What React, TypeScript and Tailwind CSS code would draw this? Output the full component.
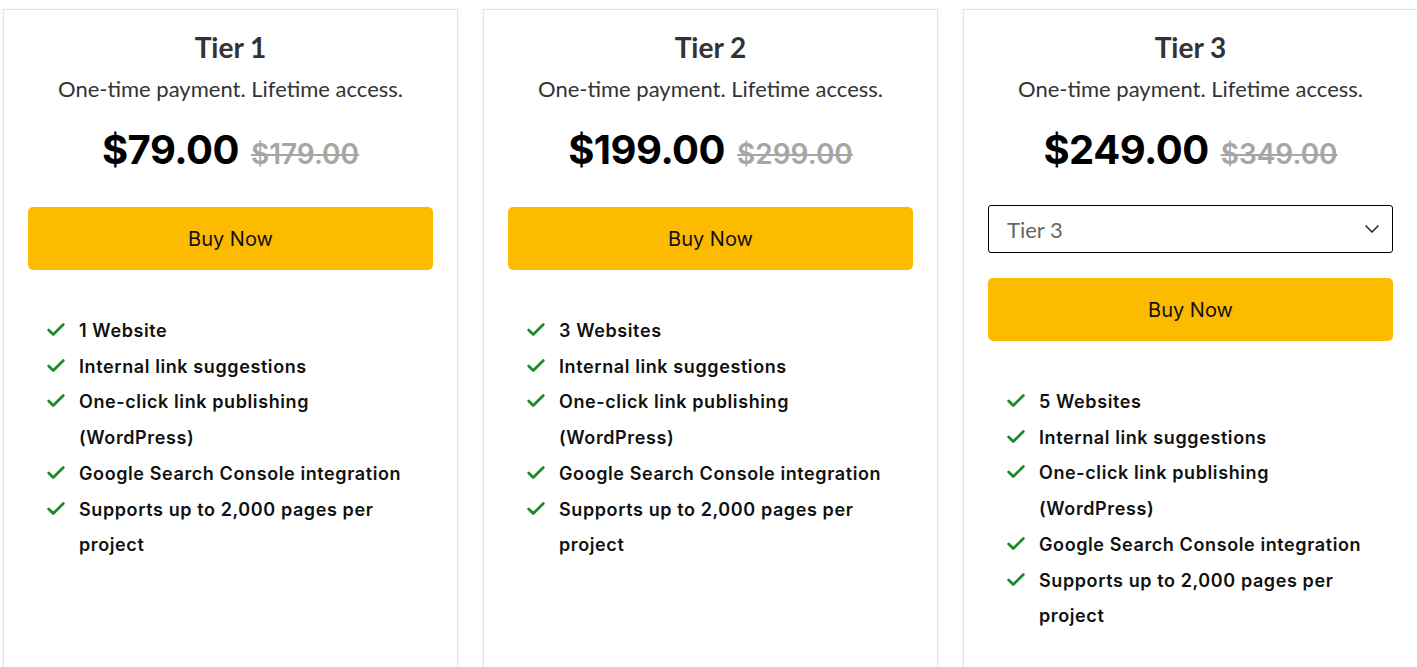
import { Check, ChevronDown } from 'lucide-react'

const features = (sites: string) => [
  sites,
  'Internal link suggestions',
  'One-click link publishing (WordPress)',
  'Google Search Console integration',
  'Supports up to 2,000 pages per project',
]

const tiers = [
  { name: 'Tier 1', price: '$79.00', old: '$179.00', sites: '1 Website', select: false },
  { name: 'Tier 2', price: '$199.00', old: '$299.00', sites: '3 Websites', select: false },
  { name: 'Tier 3', price: '$249.00', old: '$349.00', sites: '5 Websites', select: true },
]

function Card({ tier }: { tier: (typeof tiers)[number] }) {
  return (
    <div className="w-[455px] shrink-0 h-[680px] bg-white border border-[#e3e3e3] shadow-[0_0_4px_rgba(0,0,0,0.06)] px-6 pt-[21px]">
      <h2 className="text-center text-[28px] leading-8 font-bold text-[#333] font-['Lato',sans-serif]">{tier.name}</h2>
      <p className="text-center text-[22px] leading-[26px] mt-[13px] text-[#333] font-['Lato',sans-serif]">
        One-time payment. Lifetime access.
      </p>
      <div className="flex items-baseline justify-center gap-3 mt-[24px] h-12 font-['Inter',sans-serif]">
        <span className="text-[40px] leading-[48px] font-bold text-black tracking-[-0.5px]">{tier.price}</span>
        <span className="text-[28px] font-semibold text-[#a6a6a6] line-through">{tier.old}</span>
      </div>

      {tier.select && (
        <div className="mt-[31px] h-12 border border-black rounded-[3px] flex items-center justify-between pl-[18px] pr-2 font-['Lato',sans-serif] text-[22px] text-[#666]">
          <span>Tier 3</span>
          <ChevronDown className="w-6 h-6 text-[#333]" strokeWidth={1.75} />
        </div>
      )}

      <button
        type="button"
        className={`w-full h-[63px] rounded-[5px] bg-[#fdbb00] text-[20px] text-[#111] font-['Inter',sans-serif] ${
          tier.select ? 'mt-[25px]' : 'mt-[33px]'
        }`}
      >
        Buy Now
      </button>

      <ul className="mt-[43px] pl-[17px] pr-4 font-['Inter',sans-serif]">
        {features(tier.sites).map((f) => (
          <li
            key={f}
            className="flex items-start gap-3 text-[18px] leading-[35.7px] font-semibold tracking-[0.6px] text-[#111]"
          >
            <Check className="w-[22px] h-[22px] mt-[6px] shrink-0 text-[#1e8a2e]" strokeWidth={3} />
            <span className="max-w-[335px]">{f}</span>
          </li>
        ))}
      </ul>
    </div>
  )
}

export default function App() {
  return (
    <div className="w-[1417px] h-[667px] overflow-hidden bg-white">
      <div className="flex gap-[25px] pl-[3px] pt-[9px]">
        {tiers.map((t) => (
          <Card key={t.name} tier={t} />
        ))}
      </div>
    </div>
  )
}
